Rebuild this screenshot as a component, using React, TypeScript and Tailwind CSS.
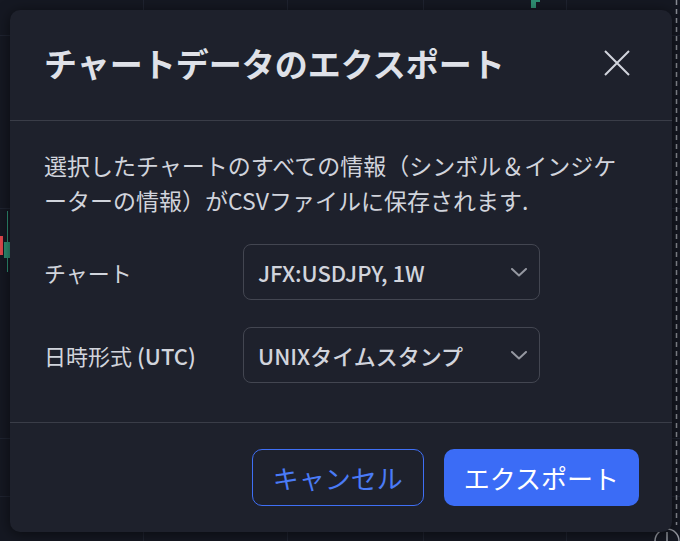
import React from "react";

const font = '"Noto Sans CJK JP", "Noto Sans", "Liberation Sans", sans-serif';

// chart behind the dialog (grid, candles, price scale)
function ChartBackdrop() {
  const vLines = [143, 287, 423, 566];
  const hLines = [35, 208, 438, 496];
  return (
    <svg className="absolute inset-0" width="680" height="541" viewBox="0 0 680 541">
      <rect width="680" height="541" fill="#151822" />
      {vLines.map((x) => (
        <line key={x} x1={x + 0.5} y1="0" x2={x + 0.5} y2="541" stroke="#1f2330" strokeWidth="1" />
      ))}
      {hLines.map((y) => (
        <line key={y} x1="0" y1={y + 0.5} x2="680" y2={y + 0.5} stroke="#1f2330" strokeWidth="1" />
      ))}
      <rect x="0" y="236" width="3" height="19" fill="#e0474c" />
      <line x1="7.5" y1="211" x2="7.5" y2="272" stroke="#2f8f73" strokeWidth="1" />
      <rect x="4" y="242" width="7" height="16" fill="#2f8f73" />
      <rect x="531" y="0" width="5" height="8" fill="#2f8f73" />
      <rect x="536" y="0" width="4" height="2" fill="#2f8f73" />
      <line x1="676.5" y1="0" x2="676.5" y2="525" stroke="#8a8d96" strokeWidth="1.5" strokeDasharray="5 4" />
      <circle cx="667" cy="541" r="12" fill="none" stroke="#9598a1" strokeWidth="1.5" />
      <line x1="667" y1="532" x2="667" y2="541" stroke="#9598a1" strokeWidth="1.5" />
    </svg>
  );
}

function Chevron() {
  return (
    <svg width="16" height="9" viewBox="0 0 16 9" fill="none">
      <path d="M1 1l7 6.5L15 1" stroke="#9598a1" strokeWidth="2" strokeLinecap="round" strokeLinejoin="round" />
    </svg>
  );
}

function Select({ value }: { value: string }) {
  return (
    <div className="flex h-[56px] w-[297px] items-center justify-between rounded-[8px] border border-[#434651] pl-[14px] pr-[12px]">
      <span className="text-[22px] font-medium text-[#d1d4dc]">{value}</span>
      <Chevron />
    </div>
  );
}

export default function App() {
  return (
    <div className="relative h-[541px] w-[680px] overflow-hidden" style={{ fontFamily: font }}>
      <ChartBackdrop />

      {/* Dialog */}
      <div className="relative ml-[10px] mt-[10px] flex h-[522px] w-[662px] flex-col rounded-[10px] bg-[#1e212c] shadow-[0_2px_14px_rgba(0,0,0,0.55)]">
        {/* Header */}
        <div className="flex h-[110px] items-center justify-between pb-[4px] pl-[34px] pr-[42px]">
          <h1 className="text-[33px] font-bold leading-none text-[#dfe1e8]">チャートデータのエクスポート</h1>
          <button className="flex h-[26px] w-[26px] items-center justify-center">
            <svg width="26" height="26" viewBox="0 0 26 26" fill="none">
              <path d="M1 1l24 24M25 1L1 25" stroke="#d1d4dc" strokeWidth="2" />
            </svg>
          </button>
        </div>

        <div className="h-px bg-[#3a3d48]" />

        {/* Body */}
        <div className="flex flex-1 flex-col px-[34px] pt-[27px]">
          <p className="text-[23px] leading-[35px] text-[#d1d4dc]">
            選択したチャートのすべての情報（シンボル＆インジケ
            <br />
            ーターの情報）がCSVファイルに保存されます.
          </p>

          <div className="mt-[26px] flex flex-col gap-[27px]">
            <div className="flex items-center">
              <span className="w-[199px] text-[22px] text-[#d1d4dc]">チャート</span>
              <Select value="JFX:USDJPY, 1W" />
            </div>
            <div className="flex items-center">
              <span className="w-[199px] text-[22px] text-[#d1d4dc]">
                日時形式 <span className="font-medium">(UTC)</span>
              </span>
              <Select value="UNIXタイムスタンプ" />
            </div>
          </div>
        </div>

        <div className="h-px bg-[#3a3d48]" />

        {/* Footer */}
        <div className="flex h-[109px] items-center justify-end gap-[20px] pr-[33px]">
          <button className="flex h-[57px] items-center rounded-[10px] border border-[#3f6ff5] px-[20px] text-[26px] text-[#4a7bf7]">
            キャンセル
          </button>
          <button className="flex h-[57px] items-center rounded-[10px] bg-[#3b6cf6] px-[20px] text-[26px] text-white">
            エクスポート
          </button>
        </div>
      </div>
    </div>
  );
}
